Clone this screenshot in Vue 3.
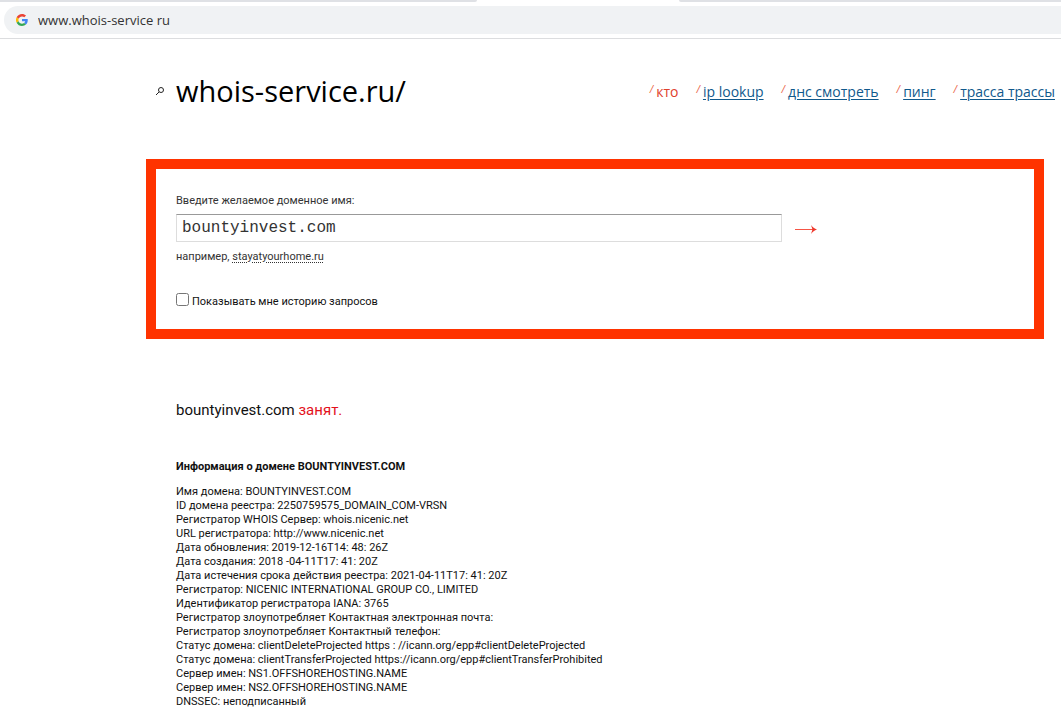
<script setup>
import { ref } from 'vue'

const address = ref('www.whois-service ru')
const domain = ref('bountyinvest.com')
const history = ref(false)

const links = ['ip lookup', 'днс смотреть', 'пинг', 'трасса трассы']

const records = [
  'Имя домена: BOUNTYINVEST.COM',
  'ID домена реестра: 2250759575_DOMAIN_COM-VRSN',
  'Регистратор WHOIS Сервер: whois.nicenic.net',
  'URL регистратора: http://www.nicenic.net',
  'Дата обновления: 2019-12-16T14: 48: 26Z',
  'Дата создания: 2018 -04-11T17: 41: 20Z',
  'Дата истечения срока действия реестра: 2021-04-11T17: 41: 20Z',
  'Регистратор: NICENIC INTERNATIONAL GROUP CO., LIMITED',
  'Идентификатор регистратора IANA: 3765',
  'Регистратор злоупотребляет Контактная электронная почта:',
  'Регистратор злоупотребляет Контактный телефон:',
  'Статус домена: clientDeleteProjected https : //icann.org/epp#clientDeleteProjected',
  'Статус домена: clientTransferProjected https://icann.org/epp#clientTransferProhibited',
  'Сервер имен: NS1.OFFSHOREHOSTING.NAME',
  'Сервер имен: NS2.OFFSHOREHOSTING.NAME',
  'DNSSEC: неподписанный',
]
</script>

<template>
  <div class="browser">
    <div class="tabs"><span class="tab-left"></span><span class="tab-right"></span></div>
    <div class="toolbar">
      <div class="omnibox">
        <svg class="google" viewBox="0 0 48 48" aria-hidden="true">
          <path fill="#ea4335" d="M24 9.500c3.500 0 6.700 1.200 9.200 3.600l6.900-6.900C35.900 2.400 30.500 0 24 0 14.600 0 6.500 5.400 2.600 13.200l8 6.200C12.400 13.700 17.700 9.500 24 9.500z" />
          <path fill="#4285f4" d="M47 24.600c0-1.600-.2-3.100-.4-4.600H24v9h12.900c-.6 3-2.300 5.500-4.800 7.200l7.700 6C44.400 38 47 31.800 47 24.600z" />
          <path fill="#fbbc05" d="M10.500 28.600a14.500 14.500 0 0 1 0-9.200l-8-6.200a24 24 0 0 0 0 21.600z" />
          <path fill="#34a853" d="M24 48c6.500 0 11.900-2.100 15.900-5.800l-7.700-6c-2.200 1.500-4.900 2.300-8.200 2.300-6.300 0-11.600-4.200-13.500-9.900l-8 6.200C6.500 42.600 14.600 48 24 48z" />
        </svg>
        <input v-model="address" class="address" type="text" aria-label="Адрес" />
      </div>
    </div>
  </div>

  <header class="header">
    <svg class="lens" viewBox="0 0 10 10" aria-hidden="true">
      <circle cx="6" cy="4" r="2.500" /><path d="M4 6 1 9" />
    </svg>
    <h1 class="title">whois-service.ru/</h1>
    <nav class="nav">
      <span class="item current"><i class="tick">/</i>кто</span>
      <span v-for="link in links" :key="link" class="item"><i class="tick">/</i><a href="#">{{ link }}</a></span>
    </nav>
  </header>

  <main>
    <form class="search" @submit.prevent>
      <label class="label" for="domain">Введите желаемое доменное имя:</label>
      <div class="row">
        <input id="domain" v-model="domain" class="domain" type="text" spellcheck="false" />
        <button class="go" type="submit" aria-label="Проверить">
          <svg viewBox="0 0 24 12" aria-hidden="true">
            <path d="M1 6.500H21" stroke="#f65545" />
            <path d="M17 2C18.500 4.500 20.500 5.500 23 6.500 20.500 7.500 18.500 8.500 17 11L18.500 6.500z" fill="#ee3529" />
          </svg>
        </button>
      </div>
      <p class="hint">например, <a href="#">stayatyourhome.ru</a></p>
      <label class="history"><input v-model="history" type="checkbox" /><span>Показывать мне историю запросов</span></label>
    </form>

    <section class="result">
      <p class="status">bountyinvest.com <span>занят.</span></p>
      <h2 class="subtitle">Информация о домене BOUNTYINVEST.COM</h2>
      <p v-for="(line, i) in records" :key="i" class="line">{{ line }}</p>
    </section>
  </main>
</template>

<style>
body {
  background: #fff;
  overflow: hidden;
}
#app {
  font-family: "Trebuchet MS", "Open Sans", "Noto Sans", sans-serif;
  color: #111;
}
</style>

<style scoped>
.browser {
  border-bottom: 1px solid #dcdddf;
}
.tabs {
  display: flex;
  justify-content: space-between;
  height: 2px;
}
.tab-left,
.tab-right {
  background: #dfe1e5;
}
.tab-left {
  width: 45%;
  border-bottom-right-radius: 2px;
}
.tab-right {
  width: 36%;
  border-bottom-left-radius: 2px;
}
.toolbar {
  padding: 4px 0 4px 4px;
}
.omnibox {
  display: flex;
  align-items: center;
  gap: 10px;
  height: 28px;
  padding-left: 12px;
  border-radius: 14px 0 0 14px;
  background: #f0f2f4;
}
.google {
  width: 12px;
  height: 12px;
}
.address {
  flex: 1;
  border: 0;
  padding: 0;
  outline: 0;
  background: none;
  font: 13px/20px "Open Sans", sans-serif;
  color: #333;
}
.header {
  display: flex;
  align-items: center;
  height: 44px;
  padding: 30px 6px 46px 155px;
}
.lens {
  width: 10px;
  height: 10px;
  margin-right: 11px;
  fill: none;
  stroke: #222;
}
.title {
  margin: 0;
  font-size: 29px;
  line-height: 40px;
  font-weight: 400;
  color: #000;
}
.nav {
  display: flex;
  gap: 18px;
  margin-left: auto;
  padding-top: 2px;
  font-size: 14px;
  line-height: 20px;
  white-space: nowrap;
}
.item {
  display: flex;
}
.tick {
  margin-right: 3px;
  font-size: 10px;
  line-height: 14px;
  color: #e9603f;
}
.current {
  color: #e0402c;
}
.nav a {
  color: #10598c;
  text-underline-offset: 2px;
}
.search {
  margin: 0 17px 0 146px;
  padding: 20px;
  border: 10px solid #f30;
  font-family: "Trebuchet MS", Roboto, sans-serif;
  font-size: 11px;
  line-height: 20px;
  color: #333;
}
.label {
  display: block;
  padding-top: 2px;
}
.row {
  display: flex;
  align-items: center;
  gap: 12px;
  margin-top: 3px;
}
.domain {
  box-sizing: border-box;
  flex: 0 1 606px;
  min-width: 0;
  height: 28px;
  padding: 0 5px;
  border: 1px solid #ddd;
  border-top-color: #999;
  border-radius: 0;
  outline: 0;
  font: 16px/24px "Liberation Mono", monospace;
  color: #333;
}
.go {
  display: flex;
  padding: 2px 0 0;
  border: 0;
  background: none;
}
.go svg {
  width: 24px;
  height: 12px;
  fill: none;
}
.hint {
  margin: 5px 0 22px;
}
.hint a {
  color: inherit;
  text-decoration: underline dotted;
  text-underline-offset: 2px;
}
.history {
  display: flex;
  align-items: flex-start;
  gap: 3px;
  height: 20px;
  color: #111;
}
.history input {
  width: 13px;
  height: 13px;
  margin: 4px 0 0;
}
.history span {
  padding-top: 3px;
}
.result {
  padding: 60px 20px 0 176px;
  font-family: "Trebuchet MS", Roboto, sans-serif;
  font-size: 11px;
  line-height: 14px;
}
.status {
  margin: 0 0 36px;
  font-size: 15px;
  line-height: 23px;
}
.status span {
  color: #e3121c;
}
.subtitle {
  margin: 0 0 9px;
  font-size: 11px;
  line-height: 18px;
}
.line {
  margin: 0;
}
</style>
